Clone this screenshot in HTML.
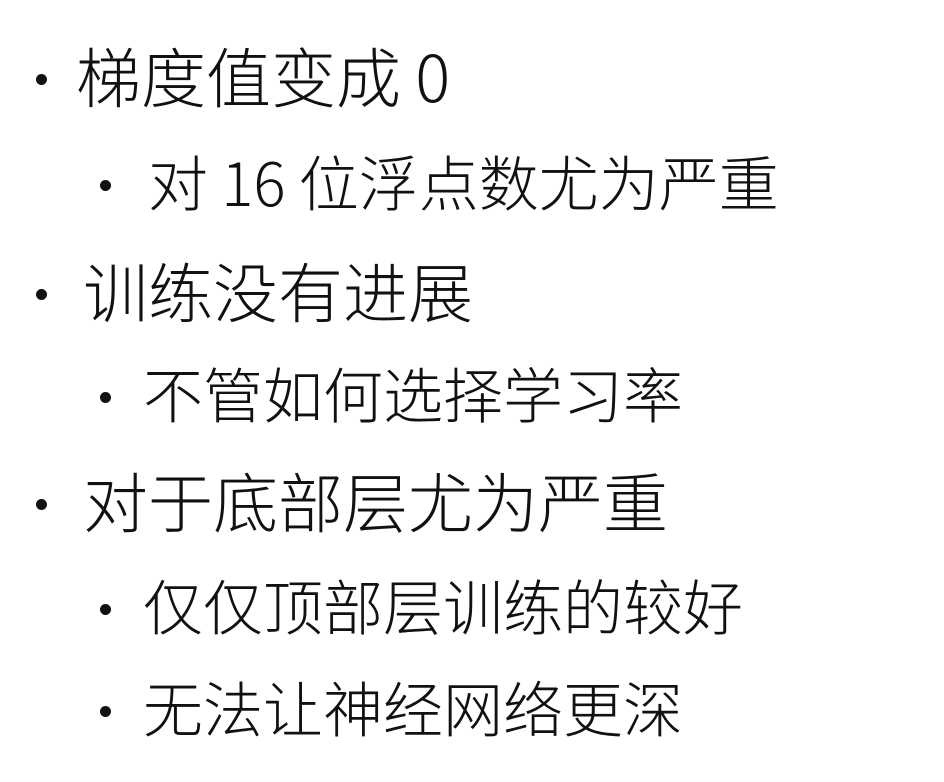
<!DOCTYPE html>
<html><head><meta charset="utf-8"><style>
html,body{margin:0;padding:0;width:944px;height:782px;background:#fff;overflow:hidden}
div{position:absolute;white-space:nowrap;color:#111;font-family:"Noto Sans CJK SC",sans-serif;font-weight:300}
.l1{font-size:65px;line-height:65px}
.l2{font-size:60px;line-height:60px}
.b{width:11px;height:11px;border-radius:50%;background:#111}
</style></head><body>
<div class="b" style="left:36px;top:74px"></div>
<div class="l1" style="left:76px;top:42px">梯度值变成 0</div>
<div class="b" style="left:100px;top:180px"></div>
<div class="l2" style="left:148px;top:151px">对 16 位浮点数尤为严重</div>
<div class="b" style="left:36px;top:289px"></div>
<div class="l1" style="left:83px;top:257px">训练没有进展</div>
<div class="b" style="left:100px;top:392px"></div>
<div class="l2" style="left:143px;top:363px">不管如何选择学习率</div>
<div class="b" style="left:36px;top:499px"></div>
<div class="l1" style="left:83px;top:467px">对于底部层尤为严重</div>
<div class="b" style="left:100px;top:604px"></div>
<div class="l2" style="left:143px;top:575px">仅仅顶部层训练的较好</div>
<div class="b" style="left:100px;top:706px"></div>
<div class="l2" style="left:143px;top:677px">无法让神经网络更深</div>
</body></html>
